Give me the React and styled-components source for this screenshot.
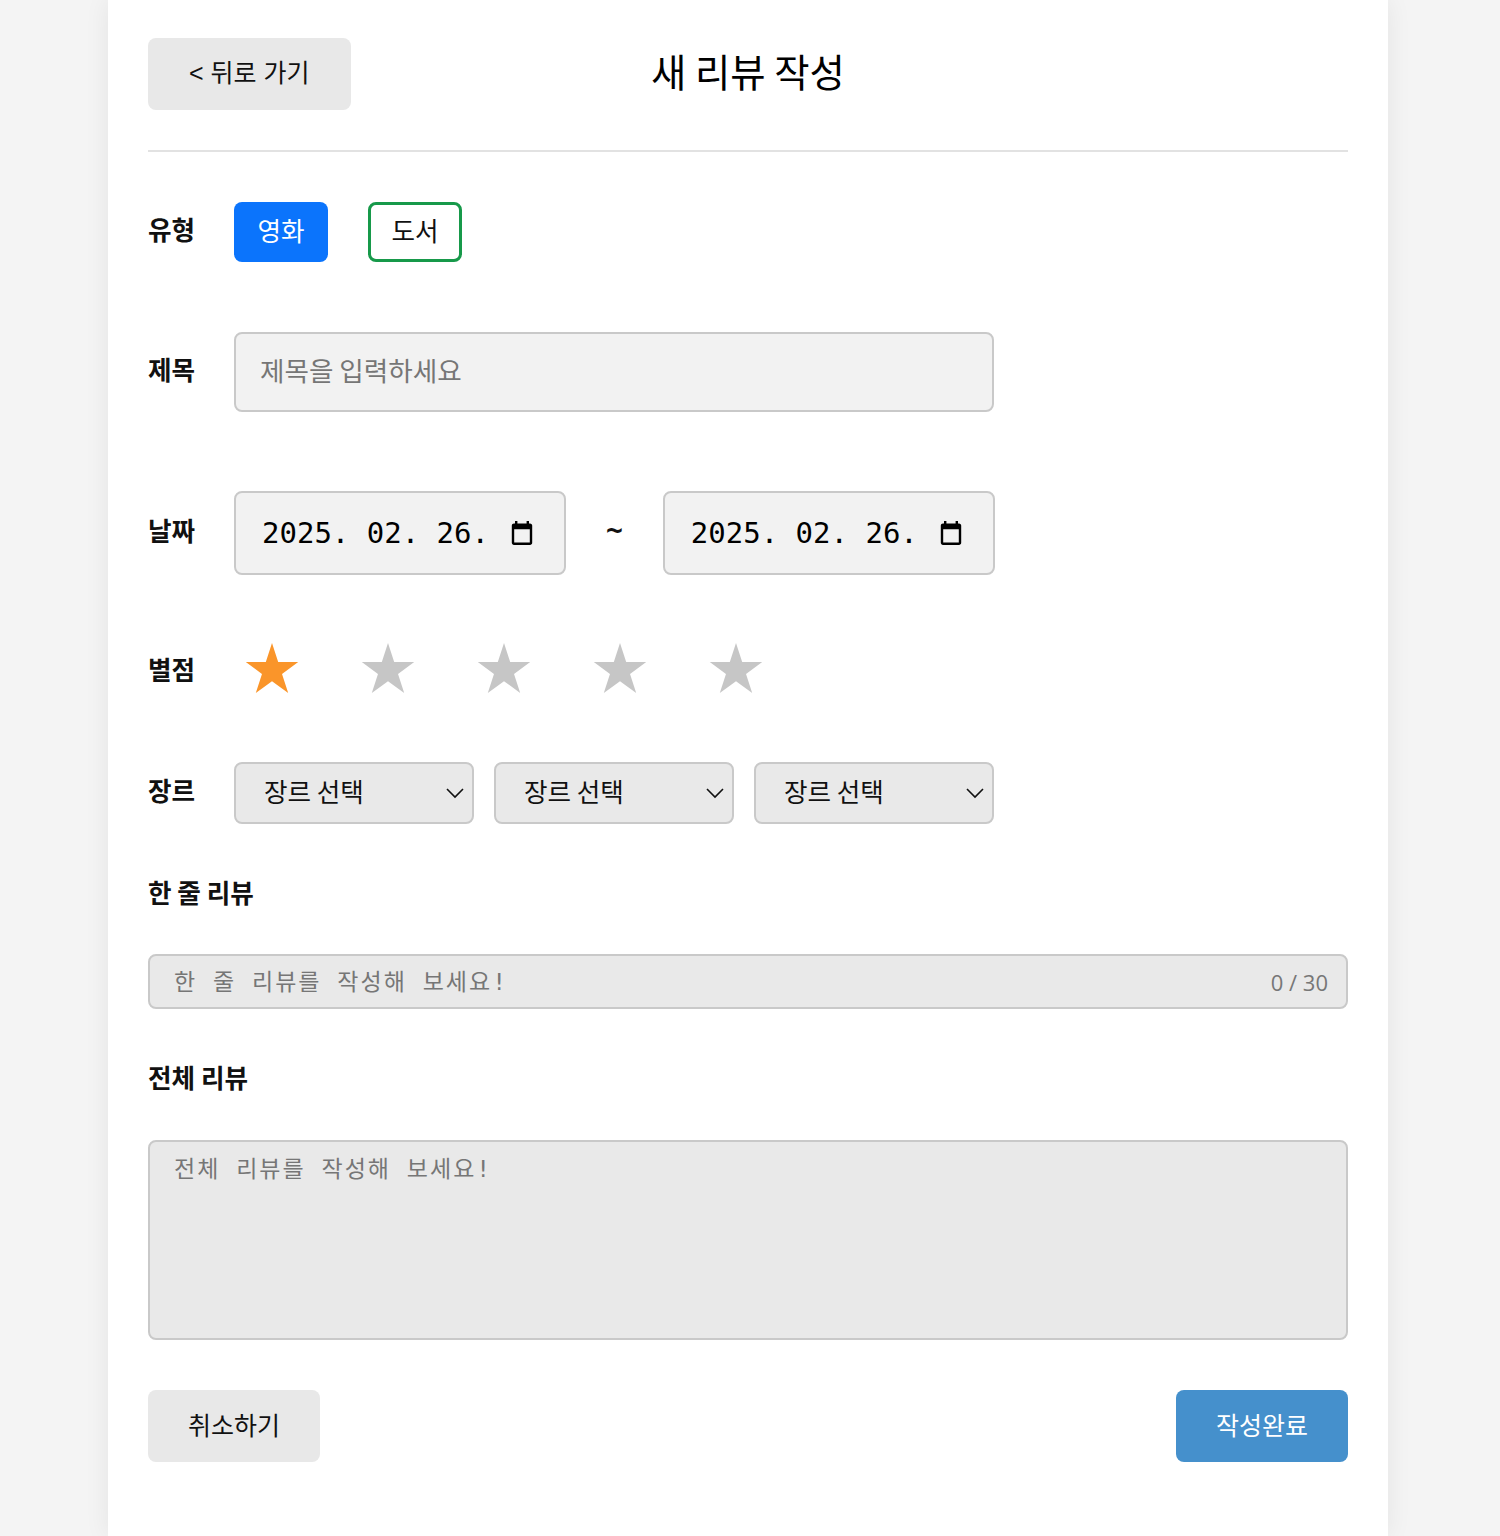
import React, { useState } from "react";
import styled, { createGlobalStyle } from "styled-components";

const GlobalStyle = createGlobalStyle`
  body {
    margin: 0;
    background-color: #f4f4f4;
    font-family: "Noto Sans CJK KR", "Noto Sans", sans-serif;
    color: #111;
  }
`;

const Page = styled.div`
  width: 1280px;
  min-height: 1536px;
  margin: 0 0 0 108px;
  background-color: #fff;
  box-shadow: 0 0 24px rgba(0, 0, 0, 0.07);
  padding: 38px 40px 40px;
  box-sizing: border-box;
`;

const Header = styled.header`
  display: grid;
  grid-template-columns: 1fr auto 1fr;
  align-items: center;
  height: 72px;
`;

const Title = styled.h1`
  margin: 0 0 8px;
  font-size: 38.4px;
  font-weight: 400;
  color: #000;
`;

const GrayButton = styled.button`
  border: none;
  border-radius: 8px;
  background-color: #e8e8e8;
  color: #111;
  font-family: "Noto Sans CJK KR", sans-serif;
  font-size: 25px;
  height: 72px;
  padding: 0 40px 4px;
  cursor: pointer;
  justify-self: start;
`;

const BackButton = styled(GrayButton)`
  font-family: "Liberation Sans", "Noto Sans CJK KR", sans-serif;
  padding: 0 41px 6px;
`;

const Divider = styled.hr`
  border: none;
  border-top: 2px solid #e2e2e2;
  margin: 40px 0 50px;
`;

const Row = styled.div`
  display: flex;
  align-items: center;
  height: ${(p) => p.$h}px;
  margin-bottom: ${(p) => p.$mb || 0}px;
`;

const Label = styled.div`
  width: 86px;
  flex-shrink: 0;
  font-size: 25.6px;
  font-weight: 700;
  margin-bottom: ${(p) => (p.$low ? 0 : 8)}px;
`;

const Controls = styled.div`
  display: flex;
  align-items: center;
  gap: ${(p) => p.$gap || 0}px;
`;

const TypeButton = styled.button`
  width: 94px;
  height: 60px;
  border-radius: 8px;
  font-family: "Noto Sans CJK KR", sans-serif;
  font-size: 25.6px;
  padding: 0 0 6px;
  cursor: pointer;
  box-sizing: border-box;
  border: ${(p) => (p.$active ? "none" : "3px solid #17994a")};
  background-color: ${(p) => (p.$active ? "#0b74fc" : "#fff")};
  color: ${(p) => (p.$active ? "#fff" : "#111")};
`;

const TextInput = styled.input`
  width: 760px;
  height: 80px;
  box-sizing: border-box;
  border: 2px solid #c9c9c9;
  border-radius: 8px;
  background-color: #f2f2f2;
  padding: 0 24px 6px;
  font-family: "Noto Sans CJK KR", sans-serif;
  font-size: 26.6px;
  outline: none;
  &::placeholder {
    color: #767676;
  }
`;

const DateBox = styled.div`
  width: 332px;
  height: 84px;
  box-sizing: border-box;
  border: 2px solid #c9c9c9;
  border-radius: 8px;
  background-color: #f2f2f2;
  display: flex;
  align-items: center;
  justify-content: space-between;
  padding: 0 30px 0 26px;
  font-family: "DejaVu Sans Mono", monospace;
  font-size: 29px;
  color: #000;
`;

const Tilde = styled.span`
  font-family: "DejaVu Sans Mono", monospace;
  font-size: 28px;
  font-weight: 700;
  margin-bottom: 8px;
`;

const StarButton = styled.button`
  width: 76px;
  height: 70px;
  padding: 0;
  border: none;
  background: none;
  display: flex;
  align-items: center;
  justify-content: center;
  cursor: pointer;
  color: ${(p) => (p.$on ? "#fa952a" : "#c6c6c6")};
`;

const SelectBox = styled.div`
  width: 240px;
  height: 62px;
  box-sizing: border-box;
  border: 2px solid #c9c9c9;
  border-radius: 8px;
  background-color: #e9e9e9;
  display: flex;
  align-items: center;
  justify-content: space-between;
  padding: 0 2px 0 28px;
  font-size: 25.6px;
  color: #111;
  span {
    margin-bottom: 6px;
  }
`;

const SectionLabel = styled.div`
  font-size: 25.6px;
  font-weight: 700;
  line-height: 34px;
  margin-top: ${(p) => p.$mt}px;
`;

const LineWrap = styled.div`
  position: relative;
  margin-top: 45px;
`;

const LineInput = styled.input`
  width: 100%;
  height: 55px;
  box-sizing: border-box;
  border: 2px solid #c9c9c9;
  border-radius: 8px;
  background-color: #e9e9e9;
  padding: 0 100px 0 24px;
  font-family: "DejaVu Sans Mono", "Noto Sans CJK KR", monospace;
  font-size: 23px;
  letter-spacing: 2px;
  outline: none;
  &::placeholder {
    color: #767676;
  }
`;

const Counter = styled.span`
  position: absolute;
  right: 20px;
  top: 50%;
  transform: translateY(-50%);
  font-family: "Open Sans", sans-serif;
  font-size: 22px;
  color: #777;
`;

const TextArea = styled.textarea`
  display: block;
  width: 100%;
  height: 200px;
  margin-top: 46px;
  box-sizing: border-box;
  border: 2px solid #c9c9c9;
  border-radius: 8px;
  background-color: #e9e9e9;
  padding: 8px 24px;
  font-family: "DejaVu Sans Mono", "Noto Sans CJK KR", monospace;
  font-size: 23px;
  letter-spacing: 2px;
  resize: none;
  outline: none;
  &::placeholder {
    color: #767676;
  }
`;

const Footer = styled.div`
  display: flex;
  justify-content: space-between;
  margin-top: 50px;
`;

const SubmitButton = styled(GrayButton)`
  background-color: #4590cc;
  color: #fff;
`;

const Star = () => (
  <svg width="54" height="50" viewBox="0 0 56 53.4">
    <polygon
      fill="currentColor"
      points="28,0 34.6,20.4 56,20.4 38.7,33 45.3,53.4 28,40.8 10.7,53.4 17.3,33 0,20.4 21.4,20.4"
    />
  </svg>
);

const Calendar = () => (
  <svg width="24" height="26" viewBox="0 0 24 26">
    <path
      fill="#000"
      d="M5 1h2.4v2.4h9.2V1H19v2.4h1c1.3 0 2.2 1 2.2 2.2v17.2c0 1.3-1 2.2-2.2 2.2H4c-1.3 0-2.2-1-2.2-2.2V5.6c0-1.3 1-2.2 2.2-2.2h1V1zm-0.8 8.2v13.4h15.6V9.2H4.2z"
    />
  </svg>
);

const Chevron = () => (
  <svg width="30" height="30" viewBox="0 0 30 30">
    <path d="M7 11l8 8 8-8" fill="none" stroke="#111" strokeWidth="1.6" />
  </svg>
);

export default function App() {
  const [type, setType] = useState("movie");
  const [rating, setRating] = useState(1);

  return (
    <>
      <GlobalStyle />
      <Page>
        <Header>
          <BackButton>&lt; 뒤로 가기</BackButton>
          <Title>새 리뷰 작성</Title>
          <div />
        </Header>
        <Divider />

        <Row $h={60} $mb={70}>
          <Label>유형</Label>
          <Controls $gap={40}>
            <TypeButton $active={type === "movie"} onClick={() => setType("movie")}>
              영화
            </TypeButton>
            <TypeButton $active={type === "book"} onClick={() => setType("book")}>
              도서
            </TypeButton>
          </Controls>
        </Row>

        <Row $h={80} $mb={79}>
          <Label>제목</Label>
          <TextInput placeholder="제목을 입력하세요" />
        </Row>

        <Row $h={84} $mb={58}>
          <Label>날짜</Label>
          <Controls $gap={40}>
            <DateBox>
              <span>2025. 02. 26.</span>
              <Calendar />
            </DateBox>
            <Tilde>~</Tilde>
            <DateBox>
              <span>2025. 02. 26.</span>
              <Calendar />
            </DateBox>
          </Controls>
        </Row>

        <Row $h={70} $mb={59}>
          <Label $low>별점</Label>
          <Controls $gap={40}>
            {[1, 2, 3, 4, 5].map((n) => (
              <StarButton key={n} $on={n <= rating} onClick={() => setRating(n)}>
                <Star />
              </StarButton>
            ))}
          </Controls>
        </Row>

        <Row $h={62}>
          <Label>장르</Label>
          <Controls $gap={20}>
            {[0, 1, 2].map((i) => (
              <SelectBox key={i}>
                <span>장르 선택</span>
                <Chevron />
              </SelectBox>
            ))}
          </Controls>
        </Row>

        <SectionLabel $mt={51}>한 줄 리뷰</SectionLabel>
        <LineWrap>
          <LineInput placeholder="한 줄 리뷰를 작성해 보세요!" />
          <Counter>0 / 30</Counter>
        </LineWrap>

        <SectionLabel $mt={51}>전체 리뷰</SectionLabel>
        <TextArea placeholder="전체 리뷰를 작성해 보세요!" />

        <Footer>
          <GrayButton>취소하기</GrayButton>
          <SubmitButton>작성완료</SubmitButton>
        </Footer>
      </Page>
    </>
  );
}
